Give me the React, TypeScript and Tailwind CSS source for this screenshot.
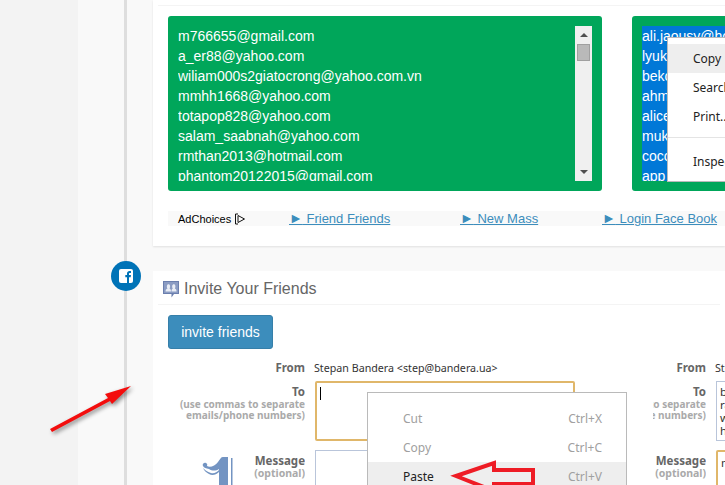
import React from "react";

const sans = "font-['Liberation_Sans',Arial,sans-serif]";
const tahoma = "font-['Noto_Sans','Open_Sans',sans-serif]";
const menuFont = "font-['Noto_Sans','Open_Sans',sans-serif]";

const emails = ["m766655@gmail.com","a_er88@yahoo.com","wiliam000s2giatocrong@yahoo.com.vn","mmhh1668@yahoo.com","totapop828@yahoo.com","salam_saabnah@yahoo.com","rmthan2013@hotmail.com","phantom20122015@gmail.com"];
const selected = ["ali.jaousy@hotmail.com","lyuk@yahoo.com","beko@yahoo.com","ahmed@yahoo.com","alice@yahoo.com","muk@yahoo.com","coco@yahoo.com","app mail@yahoo.com"];

function Scrollbar() {
  return (
    <div className="w-[17px] h-full bg-[#f0f0f0] flex flex-col items-center shrink-0">
      <div className="h-[18px] flex items-center justify-center">
        <div className="w-0 h-0 border-x-[4px] border-x-transparent border-b-[4px] border-b-[#505050]" />
      </div>
      <div className="w-[13px] h-[17px] bg-[#b9b9b9] border border-[#a0a0a0]" />
      <div className="flex-1" />
      <div className="h-[18px] flex items-center justify-center">
        <div className="w-0 h-0 border-x-[4px] border-x-transparent border-t-[4px] border-t-[#505050]" />
      </div>
    </div>
  );
}

function AdLink({ w, children }: { w: string; children: string }) {
  return (
    <div className={`${w} pb-[3px]`}>
      <a className={`${sans} text-[13px] text-[#3c8dbc] underline whitespace-nowrap`}><span className="text-[14px]">►</span>{" " + children}</a>
    </div>
  );
}

function FormCol({ labelW, to, toCls, msg, msgCls, from, boxW }: { labelW: string; to: React.ReactNode; toCls: string; msg?: React.ReactNode; msgCls: string; from: string; boxW: string }) {
  const label = `${labelW} shrink-0 overflow-hidden flex flex-col items-end text-right whitespace-nowrap`;
  return (
    <div className={`${tahoma} flex flex-col shrink-0`}>
      <div className="flex gap-[10px] h-[22px] pb-[4px] items-center">
        <div className={label}><span className="text-[11.5px] font-bold text-[#666]">From</span></div>
        <span className="-ml-px text-[10.7px] text-[#333] whitespace-nowrap">{from}</span>
      </div>
      <div className="flex gap-[10px] h-[60px]">
        <div className={`${label} pt-[3px]`}>
          <span className="text-[11.5px] leading-[15px] font-bold text-[#666]">To</span>
          <span className="text-[10px] leading-[11px] font-bold text-[#aaa]">(use commas to separate</span>
          <span className="text-[10px] leading-[11px] font-bold text-[#aaa]">emails/phone numbers)</span>
        </div>
        <div className={`${boxW} h-[60px] bg-white px-[3px] py-[3px] text-[11.5px] leading-[13px] text-[#333] overflow-hidden ${toCls}`}>{to}</div>
      </div>
      <div className="flex gap-[10px] mt-[9px] h-[40px]">
        <div className={`${label} pt-[3px]`}>
          <span className="text-[11.5px] leading-[15px] font-bold text-[#666]">Message</span>
          <span className="text-[10.5px] leading-[11px] font-bold text-[#aaa]">(optional)</span>
        </div>
        <div className={`${boxW} h-[40px] bg-white px-[3px] py-[2px] text-[11.5px] text-[#333] overflow-hidden ${msgCls}`}>{msg}</div>
      </div>
    </div>
  );
}

function MenuItem({ label, keys, active, disabled, pad }: { label: string; keys?: string; active?: boolean; disabled?: boolean; pad?: string }) {
  return (
    <div className={`flex justify-between items-center h-[29px] ${pad ?? "pl-[25px]"} pr-[24px] ${active ? "bg-[#eeeeee]" : ""}`}>
      <span className={disabled ? "text-[#a0a0a0]" : "text-[#222]"}>{label}</span>
      {keys && <span className="text-[#a0a0a0]">{keys}</span>}
    </div>
  );
}

export default function App() {
  return (
    <div className="relative w-[725px] h-[485px] overflow-hidden flex bg-[#f9f9f9]">
      <div className="w-[78px] shrink-0 bg-[#f3f3f3]" />
      <div className="w-[75px] shrink-0 pl-[46px]">
        <div className="w-[3px] h-full bg-[#dedede]" />
      </div>
      <div className="flex-1 min-w-0 flex flex-col gap-[25px]">
        {/* upper card */}
        <div className="h-[246px] shrink-0 bg-white shadow-[0_1px_2px_rgba(0,0,0,0.1)] flex flex-col">
          <div className="ml-[5px] mt-[5px] h-[1px] bg-[#f4f4f4]" />
          <div className="flex gap-[30px] pl-[15px] mt-[10px] h-[175px] overflow-hidden">
            <div className="w-[434px] shrink-0 h-full bg-[#00a65a] rounded-[3px] pl-[10px] pr-[10px] py-[10px] flex justify-between">
              <div className={`${sans} text-[14px] leading-[20px] text-white h-[155px] overflow-hidden whitespace-nowrap`}>
                {emails.map((e) => <div key={e}>{e}</div>)}
              </div>
              <Scrollbar />
            </div>
            <div className="w-[200px] shrink-0 h-full bg-[#00a65a] rounded-[3px] pl-[10px] py-[10px]">
              <div className={`${sans} text-[14px] leading-[20px] text-white h-[155px] overflow-hidden whitespace-nowrap`}>
                {selected.map((e) => <div key={e} className="bg-[#0078d7]">{e}</div>)}
              </div>
            </div>
          </div>
          <div className="ml-[15px] mt-[20px] h-[15px] bg-[#f9f9f9] flex items-center">
            <div className="w-[121px] pl-[10px] pt-[1px] flex items-center gap-[3px] shrink-0">
              <span className={`${sans} text-[11px] text-black`}>AdChoices</span>
              <svg width="12" height="12" viewBox="0 0 12 12" fill="none" stroke="#111" strokeWidth="1"><path d="M1.5 1 H4 M1.5 1 V11 H4 M4 2.5 L10.5 6 L4 9.5 Z" /></svg>
            </div>
            <AdLink w="w-[171px] shrink-0">Friend Friends</AdLink>
            <AdLink w="w-[142px] shrink-0">New Mass</AdLink>
            <AdLink w="shrink-0">Login Face Book</AdLink>
          </div>
        </div>

        {/* invite card */}
        <div className="flex-1 min-h-0 bg-white flex flex-col overflow-hidden">
          <div className="mx-[5px] h-[34px] shrink-0 border-b border-[#f4f4f4] flex items-center gap-[5px] pl-[5px] pt-[3px]">
            <svg width="16" height="17" viewBox="0 0 16 17">
              <path d="M0 0H16V13H11L8.5 16.5V13H0Z" fill="#6b7fae" />
              <rect x="1" y="1" width="14" height="11" fill="#8b9cc3" />
              <path d="M2.5 10.5 C2.5 8 4 8 4.5 7.5 C3.5 6 3.7 3.2 5.5 3.2 C7.3 3.2 7.5 6 6.5 7.5 C7 8 8 8 8 10.5Z M8.5 10.5 C8.5 8.5 9 8 9.8 7.5 C8.8 6 9 3.2 10.8 3.2 C12.6 3.2 12.8 6 11.8 7.5 C12.4 8 13.6 8 13.6 10.5Z" fill="#e9edf5" />
            </svg>
            <span className={`${sans} text-[16px] text-[#666]`}>Invite Your Friends</span>
          </div>
          <div className="ml-[15px] mt-[10px] w-[105px] h-[34px] shrink-0 rounded-[3px] bg-[#3c8dbc] border border-[#367fa9] flex items-center justify-center">
            <span className={`${sans} text-[14px] text-white`}>invite friends</span>
          </div>
          <div className="flex mt-[10px] ml-[15px] gap-[78px] shrink-0">
            <FormCol labelW="w-[137px]" boxW="w-[260px]" from="Stepan Bandera <step@bandera.ua>" toCls="border-2 border-[#e0b76a] rounded-[2px]" msgCls="border border-[#b9c5da]"
              to={<span className="block w-[1px] h-[13px] bg-black mt-px" />} />
            <FormCol labelW="w-[53px]" boxW="w-[200px]" from="Stepan Bandera <step@bandera.ua>" toCls="border border-[#b9c5da]" msgCls="border-2 border-[#e0b76a] rounded-[2px]"
              to={<><div>bob@yahoo.com</div><div>ra@yahoo.com</div><div>wi@yahoo.com</div><div>ha@yahoo.com</div></>} msg="message" />
          </div>
        </div>
      </div>

      {/* facebook badge */}
      <div className="absolute left-[111px] top-[261px] w-[30px] h-[30px] rounded-full bg-[#0073b7] flex items-center justify-center">
        <div className="w-[14px] h-[14px] bg-white rounded-[2px] overflow-hidden">
          <svg width="14" height="14" viewBox="0 0 14 14"><path d="M8 14V8.2H6.3V6H8V4.6C8 2.9 9 2 10.5 2H12V4H11C10.2 4 10 4.4 10 5V6H12L11.7 8.2H10V14Z" fill="#0073b7" /></svg>
        </div>
      </div>

      {/* "1" mark */}
      <svg className="absolute left-[200px] top-[456px]" width="34" height="30" viewBox="0 0 34 30">
        <path d="M19 30V13C16 15 12 15 9 13C6 12 4 12 3 10C2 8 4 6 6 7C8 8 7 9 7 10C10 12 15 10 18 6C20 3 21 1 23 1H28V30Z" fill="#7394c2" />
        <path d="M3 12C6 15 8 16 11 17C14 18 17 16 19 14V16C16 19 12 20 9 18C7 17 4 15 3 12Z" fill="#7394c2" />
        <rect x="31" y="2" width="1.5" height="28" fill="#7394c2" />
      </svg>

      {/* upper context menu */}
      <div className={`${menuFont} absolute left-[667px] top-[37px] w-[120px] h-[145px] bg-white border border-[#bababa] pt-[6px] text-[12px]`}>
        <MenuItem label="Copy" active />
        <MenuItem label="Search" />
        <MenuItem label="Print..." />
        <div className="mt-[6px] mb-[9px] h-[1px] bg-[#e4e4e4]" />
        <MenuItem label="Inspect" />
      </div>

      {/* lower context menu */}
      <div className={`${menuFont} absolute left-[367px] top-[392px] w-[260px] h-[110px] bg-white border border-[#bababa] pt-[11px] text-[12px]`}>
        <MenuItem label="Cut" keys="Ctrl+X" disabled pad="pl-[35px]" />
        <MenuItem label="Copy" keys="Ctrl+C" disabled pad="pl-[35px]" />
        <MenuItem label="Paste" keys="Ctrl+V" active pad="pl-[35px]" />
      </div>

      {/* red annotation arrows */}
      <svg className="absolute left-[0px] top-[370px] drop-shadow-[2px_2px_2px_rgba(0,0,0,0.45)]" width="160" height="70" viewBox="0 0 160 70" fill="none">
        <path d="M50 59 L52 62 L110 31 L112 34 L131 16 L105 24 L108 28 Z" fill="#f30d0d" />
      </svg>
      <svg className="absolute left-[450px] top-[455px]" width="90" height="30" viewBox="0 0 90 30" fill="none">
        <path d="M6 21 L44 8 V15 H83 V29 H44 V36 Z" stroke="#ee1c25" strokeWidth="4" strokeLinejoin="miter" />
      </svg>
    </div>
  );
}
